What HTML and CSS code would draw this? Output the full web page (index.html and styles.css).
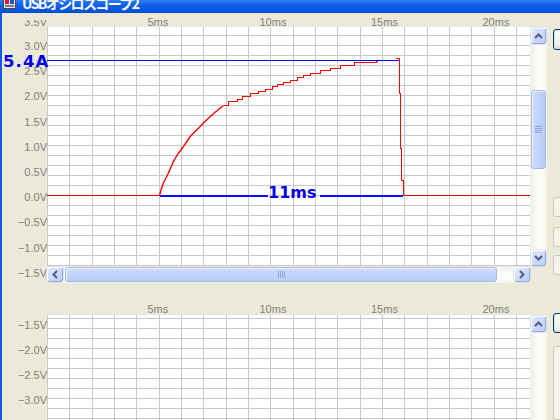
FILE: index.html
```html
<!DOCTYPE html>
<html lang="ja">
<head>
<meta charset="utf-8">
<title>USBオシロスコープ2</title>
<link rel="stylesheet" href="styles.css">
</head>
<body>
<header class="titlebar">
  <svg class="appicon" width="13" height="10" viewBox="0 0 13 10">
    <rect x="0.5" y="-2.5" width="12" height="11" fill="#e6e6e6" stroke="#4a4a4a"/>
    <rect x="2" y="0" width="4" height="4" fill="#d81e1e"/>
    <rect x="7" y="0" width="4" height="4" fill="#1e4fd8"/>
    <rect x="2" y="5" width="9" height="2" fill="#7a7a7a"/>
  </svg>
  <span class="title">USBオシロスコープ2</span>
</header>
<div class="frame">
  <div class="edge"></div>
  <main class="client">
    <section class="scope scope-top">
      <svg class="ylabels ylabels-top" width="45" height="263">
        <g class="axis-text" text-anchor="end">
          <text x="45" y="5.5">3.5V</text>
          <text x="45" y="30">3.0V</text>
          <text x="45" y="55">2.5V</text>
          <text x="45" y="80">2.0V</text>
          <text x="45" y="106">1.5V</text>
          <text x="45" y="131">1.0V</text>
          <text x="45" y="156">0.5V</text>
          <text x="45" y="181">0.0V</text>
          <text x="45" y="206">−0.5V</text>
          <text x="45" y="232">−1.0V</text>
          <text x="45" y="257">−1.5V</text>
        </g>
      </svg>
      <svg class="xaxis" width="500" height="14">
        <g class="axis-text">
          <text x="100.5" y="13">5ms</text>
          <text x="212.5" y="13">10ms</text>
          <text x="324" y="13">15ms</text>
          <text x="435.5" y="13">20ms</text>
        </g>
      </svg>
      <svg class="plot plot-top" width="483" height="239">
        <defs>
          <pattern id="gridTop" width="67" height="10" patternUnits="userSpaceOnUse">
            <path d="M0.5 0V10M22.5 0V10M45.5 0V10M0 8.5H67" stroke="#c8c8c8" stroke-width="1" fill="none"/>
          </pattern>
        </defs>
        <rect width="483" height="239" fill="url(#gridTop)"/>
        <g fill="none" shape-rendering="crispEdges">
          <path stroke="#0000ff" stroke-width="1" d="M0 33.5H352"/>
          <path stroke="#0a0aff" stroke-width="1.5" d="M112.5 168.75H221M273 168.75H356"/>
          <path stroke="#e00000" stroke-width="1" d="M0 168.5H112.5M356 168.5H483"/>
          <path stroke="#ff0000" stroke-width="1" d="M349 31.5H352.5V66H353.5V121H354.5V153H356.5V168.5"/>
          <path stroke="#ff0000" stroke-width="1" d="M176.5 78.5H181.5V74.5H190.5V72.5H195.5V69.5H203.5V66.5H211.5V64.5H218.5V62.5H225.5V59.5H230.5V57.5H236.5V55.5H243.5V53.5H250.5V50.5H256.5V48.5H263.5V46.5H273.5V43.5H283.5V41.5H293.5V38.5H307.5V35.5H329.5V34.5H330.5"/>
        </g>
        <path fill="none" stroke="#ff0000" stroke-width="1.4" stroke-linejoin="bevel" d="M112.5 168.5L114 163L116.3 156.3L119 151L121.3 146.3L124 140L126.3 134.7L129 130L131.3 126.3L134 123L136.3 119.7L139.5 115L143 109.7L148 104.5L153 99.7L158 94.5L163 89.7L169 84.5L176.5 78.5"/>
        <text class="measure" x="221" y="171">11ms</text>
      </svg>
      <div class="vscroll">
        <div class="sb-btn">
          <svg width="9" height="6" viewBox="0 0 9 6"><path d="M1 5L4.5 1.5L8 5" class="chev"/></svg>
        </div>
        <div class="sb-thumb v-thumb">
          <svg width="7" height="7" viewBox="0 0 7 7"><path d="M0 0.5H7M0 2.5H7M0 4.5H7M0 6.5H7" class="grip"/></svg>
        </div>
        <div class="sb-fill"></div>
        <div class="sb-btn">
          <svg width="9" height="6" viewBox="0 0 9 6"><path d="M1 1L4.5 4.5L8 1" class="chev"/></svg>
        </div>
      </div>
      <div class="hscroll">
        <div class="sb-btn sb-left">
          <svg width="6" height="9" viewBox="0 0 6 9"><path d="M5 1L1.5 4.5L5 8" class="chev"/></svg>
        </div>
        <div class="sb-thumb h-thumb">
          <svg width="7" height="7" viewBox="0 0 7 7"><path d="M0.5 0V7M2.5 0V7M4.5 0V7M6.5 0V7" class="grip"/></svg>
        </div>
        <div class="sb-fill"></div>
        <div class="sb-btn">
          <svg width="6" height="9" viewBox="0 0 6 9"><path d="M1 1L4.5 4.5L1 8" class="chev"/></svg>
        </div>
      </div>
      <div class="side side-top">
        <div class="xbtn default b1"></div>
        <div class="xbtn disabled b2"></div>
        <div class="xbtn disabled b3"></div>
        <div class="xbtn disabled b4"></div>
      </div>
      <div class="marker">5.4A</div>
    </section>

    <section class="scope scope-bottom">
      <svg class="xaxis" width="500" height="14">
        <g class="axis-text">
          <text x="100.5" y="11.5">5ms</text>
          <text x="212.5" y="11.5">10ms</text>
          <text x="324" y="11.5">15ms</text>
          <text x="435.5" y="11.5">20ms</text>
        </g>
      </svg>
      <svg class="ylabels ylabels-bottom" width="45" height="105">
        <g class="axis-text" text-anchor="end">
          <text x="45" y="14">−1.5V</text>
          <text x="45" y="39">−2.0V</text>
          <text x="45" y="64">−2.5V</text>
          <text x="45" y="89">−3.0V</text>
        </g>
      </svg>
      <svg class="plot plot-bottom" width="483" height="105">
        <defs>
          <pattern id="gridBottom" width="67" height="10" patternUnits="userSpaceOnUse">
            <path d="M0.5 0V10M22.5 0V10M45.5 0V10M0 3.5H67" stroke="#c8c8c8" stroke-width="1" fill="none"/>
          </pattern>
        </defs>
        <rect width="483" height="105" fill="url(#gridBottom)"/>
      </svg>
      <div class="vscroll">
        <div class="sb-btn">
          <svg width="9" height="6" viewBox="0 0 9 6"><path d="M1 5L4.5 1.5L8 5" class="chev"/></svg>
        </div>
        <div class="sb-fill"></div>
      </div>
      <div class="side side-bottom">
        <div class="xbtn default b5"></div>
        <div class="xbtn disabled b6"></div>
      </div>
    </section>
  </main>
</div>
</body>
</html>
```
FILE: styles.css
```css
html, body {
  margin: 0;
  padding: 0;
}
body {
  width: 560px;
  height: 420px;
  overflow: hidden;
  background: #ece9d8;
  font-family: "Liberation Sans", Arial, sans-serif;
}

.titlebar {
  height: 13px;
  display: flex;
  align-items: flex-start;
  overflow: hidden;
  background: linear-gradient(#2f7ff4 0%, #0f5fea 40%, #0556e2 80%, #0a47c8 100%);
}
.appicon {
  flex: none;
  margin-left: 3px;
}
.title {
  margin-left: 6px;
  margin-top: -4px;
  color: #ffffff;
  font: bold 14px/14px "Noto Sans CJK JP", sans-serif;
  letter-spacing: -1.6px;
  white-space: nowrap;
}

.frame {
  display: flex;
  height: 407px;
}
.edge {
  width: 2px;
  flex: none;
  background: #0f5ae6;
}
.client {
  flex: 1;
  display: flex;
  flex-direction: column;
}

.scope {
  position: relative;
  display: grid;
  grid-template-columns: 45px 483px 17px 6px 40px;
}
.scope-top {
  grid-template-rows: 14px 239px 17px;
}
.scope-bottom {
  margin-top: 18px;
  grid-template-rows: 14px 105px;
}

.axis-text {
  font-family: "Liberation Sans", Arial, sans-serif;
  font-size: 11px;
  fill: #808080;
}

.ylabels {
  grid-column: 1;
  display: block;
}
.ylabels-top {
  grid-row: 1 / 4;
  align-self: end;
}
.ylabels-bottom {
  grid-row: 2;
}
.xaxis {
  grid-column: 2 / 5;
  grid-row: 1;
  display: block;
  overflow: visible;
}
.plot {
  grid-column: 2;
  grid-row: 2;
  display: block;
  background: #ffffff;
}
.measure {
  font-family: "DejaVu Sans", sans-serif;
  font-weight: bold;
  font-size: 16px;
  fill: #0000ee;
}

.marker {
  position: absolute;
  left: 1px;
  top: 40px;
  font-family: "DejaVu Sans", sans-serif;
  font-weight: bold;
  font-size: 16.5px;
  line-height: 17px;
  letter-spacing: 1.1px;
  color: #0000ee;
  white-space: nowrap;
}

/* XP-style scrollbars */
.vscroll {
  grid-column: 3;
  grid-row: 2;
  display: flex;
  flex-direction: column;
  background: linear-gradient(to right, #eeede5, #fcfcf9 40%, #fdfdfb 70%, #f2f1eb);
}
.hscroll {
  grid-column: 2;
  grid-row: 3;
  display: flex;
  background: linear-gradient(#eeede5, #fcfcf9 40%, #fdfdfb 70%, #f2f1eb);
}
.sb-btn {
  flex: none;
  box-sizing: border-box;
  width: 15px;
  height: 16px;
  margin: 1px 1px 0 1px;
  border: 1px solid;
  border-color: #ffffff #98acdc #98acdc #ffffff;
  border-radius: 3px;
  background: linear-gradient(135deg, #dfe8fe, #bccdf8);
  box-shadow: 0 0 0 0.5px #b9c9ef;
  display: flex;
  align-items: center;
  justify-content: center;
}
.hscroll .sb-btn {
  width: 16px;
  height: 15px;
  margin: 1px 0 1px 0;
}
.hscroll .sb-left {
  margin-left: 0;
}
.chev {
  fill: none;
  stroke: #4d6185;
  stroke-width: 2;
}
.sb-thumb {
  flex: none;
  box-sizing: border-box;
  border: 1px solid #a4b9ec;
  border-radius: 3px;
  background: linear-gradient(to right, #cddbfc, #b9cdf9);
  box-shadow: inset 1px 1px 0 #eef3ff;
  display: flex;
  align-items: center;
  justify-content: center;
}
.v-thumb {
  width: 15px;
  height: 79px;
  margin: 46px 1px 0 1px;
}
.h-thumb {
  width: 432px;
  height: 15px;
  margin: 1px 0 1px 2px;
  background: linear-gradient(#cddbfc, #b9cdf9);
}
.grip {
  fill: none;
  stroke: #8ea3d9;
  stroke-width: 1;
}
.sb-fill {
  flex: 1;
}

/* right-hand buttons (cut off by the window edge) */
.side {
  grid-column: 5;
  display: flex;
  flex-direction: column;
}
.side-top {
  grid-row: 1 / 4;
}
.side-bottom {
  grid-row: 1 / 3;
}
.xbtn {
  box-sizing: border-box;
  width: 40px;
  border-radius: 3px;
}
.xbtn.default {
  border: 1px solid #003c74;
  background: linear-gradient(#ffffff, #f0efe9 80%, #dcdad0);
  box-shadow: inset 1px 1px 0 #cee7ff;
}
.xbtn.disabled {
  border: 1px solid #c9c7ba;
  background: #f5f4ea;
}
.b1 { margin-top: 16px; height: 21px; }
.b2 { margin-top: 147px; height: 20px; }
.b3 { margin-top: 10px; height: 20px; }
.b4 { margin-top: 8px; height: 20px; }
.b5 { margin-top: 12px; height: 22px; }
.b6 { margin-top: 13px; height: 80px; }
```
